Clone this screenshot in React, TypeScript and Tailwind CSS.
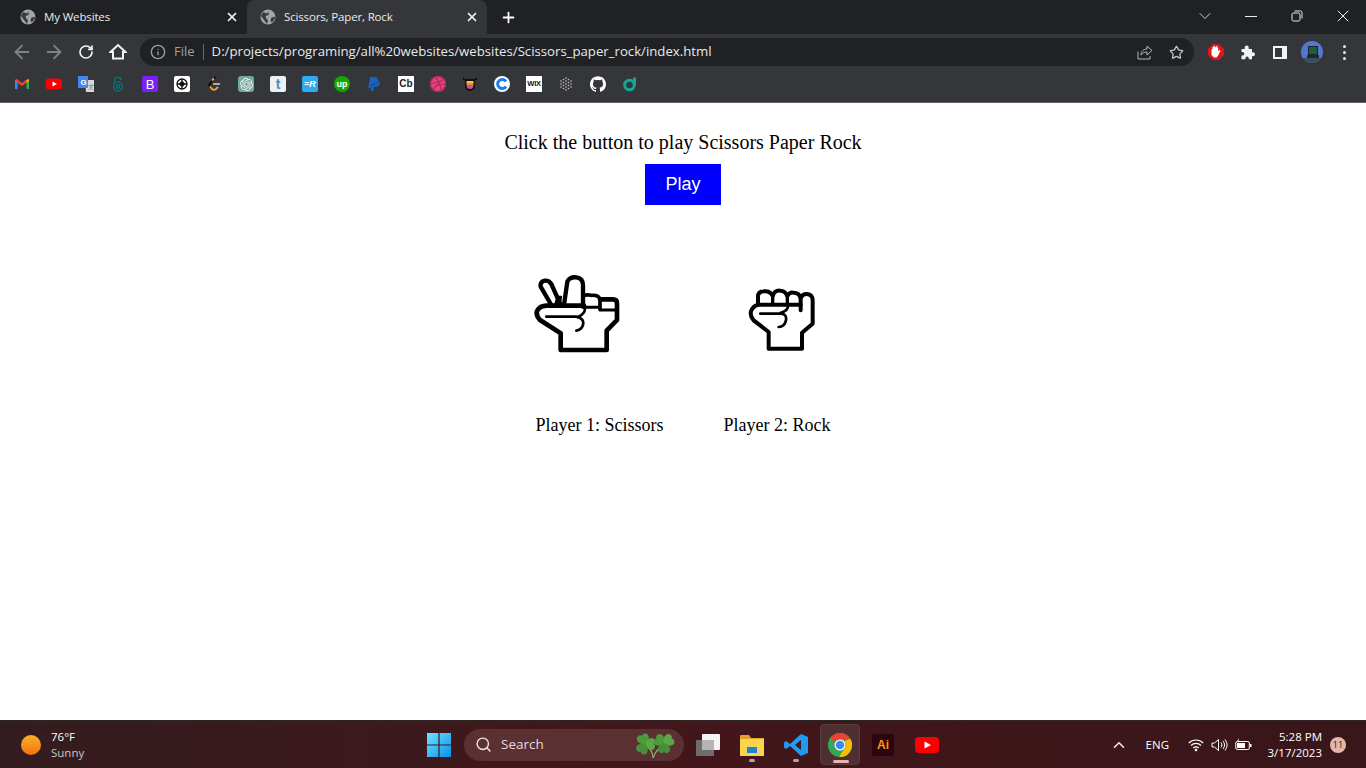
import { ArrowLeft, ArrowRight, RotateCw, Info, Star, X, Plus, ChevronDown, ChevronUp, Search } from "lucide-react";
import { SiOpenai, SiPaypal, SiDribbble, SiGithub } from "react-icons/si";
import type { ReactNode } from "react";

const Globe = () => (
  <svg width="16" height="16" viewBox="0 0 16 16">
    <circle cx="8" cy="8" r="7.500" fill="#a2a6aa" />
    <path d="M3 3 7 4.500 9 2.500 8.500 6 5.500 7 6.500 10 8 11 7 15 4 11 1 7ZM11 9l3.500-1.500.5 2-3 4-1.500-1.500Z" fill="#3a3b3f" />
  </svg>
);

const Tab = ({ title, active }: { title: string; active?: boolean }) => (
  <div className={`flex h-[34px] w-[240px] items-center rounded-t-lg pl-[13px] pr-[8px] ${active ? "bg-[#35363a]" : ""}`}>
    <Globe />
    <span className="ml-[8px] flex-1 text-[11.500px] tracking-[-0.15px] text-[#e8eaed]">{title}</span>
    <X size={14} strokeWidth={3} color="#f1f3f4" />
  </div>
);

const B = ({ children }: { children: ReactNode }) => (
  <div className="flex w-[32px] items-center justify-center">
    <div className="flex h-[16px] w-[16px] items-center justify-center overflow-hidden">{children}</div>
  </div>
);

const bookmarks: ReactNode[] = [
  <svg key="g" width="16" height="16" viewBox="0 0 16 16"><path d="M1 13V4l2.500 1v8Z" fill="#4285f4" /><path d="M12.500 13V5L15 3.500V13Z" fill="#34a853" /><path d="M1 4 2.500 2.700 8 7l5-4 2 .5v1L8 10 1 5Z" fill="#ea4335" /><path d="M12.500 5 15 3v2l-2.500 2Z" fill="#fbbc04" /></svg>,
  <svg key="y" width="16" height="16" viewBox="0 0 16 16"><rect y="2.500" width="16" height="11" rx="3" fill="#f00" /><path d="M6.500 5.500 11 8l-4.500 2.500Z" fill="#fff" /></svg>,
  <svg key="t" width="16" height="16" viewBox="0 0 16 16"><path d="M7 4h9v12H8Z" fill="#d8d8d8" /><rect width="10" height="12" rx="1" fill="#4285f4" /><text x="2.500" y="9" fontSize="8" fontWeight="700" fill="#fff" fontFamily="Liberation Sans, sans-serif">G</text><text x="10" y="13" fontSize="6" fill="#777" fontFamily="Noto Sans CJK SC, sans-serif">文</text></svg>,
  <svg key="o" width="16" height="16" viewBox="0 0 16 16" fill="none" stroke="#0e6f6f" strokeWidth="1.500"><circle cx="8" cy="10.500" r="4.500" /><circle cx="8" cy="10.500" r="1.700" /><path d="M4.500 7V4.200C4.500 .6 11 .6 11.300 4" /></svg>,
  <div key="b" className="flex h-[16px] w-[16px] items-center justify-center rounded-[2px] bg-[#7c1dfa] text-[13px] leading-none text-white [font-family:'Liberation_Sans',sans-serif]">B</div>,
  <div key="c" className="flex h-[16px] w-[16px] items-center justify-center rounded-[2px] bg-white"><svg width="12" height="12" viewBox="0 0 12 12" fill="none" stroke="#111" strokeWidth="1.300"><circle cx="6" cy="6" r="5" /><path d="M6 1v10M1 6h10M6 3.500 8.500 6 6 8.500 3.500 6Z" /></svg></div>,
  <svg key="l" width="16" height="16" viewBox="0 0 16 16" fill="none" strokeWidth="1.800"><path d="M10 1 4 7.500Q2.500 9 4 10.500" stroke="#0b0b0b" /><path d="M4 10.500 6 13q2 1.500 4 0l2-2" stroke="#f0a22e" /><path d="M7 8h7" stroke="#b5b5b5" /><path d="M8 2.500 6 4.500" stroke="#f0a22e" /></svg>,
  <div key="a" className="flex h-[16px] w-[16px] items-center justify-center rounded-[3px] bg-[#74aa9c]"><SiOpenai size={13} color="#e8f2ef" /></div>,
  <div key="tu" className="flex h-[16px] w-[16px] items-center justify-center rounded-[2px] bg-[#eef0f2] text-[14px] font-bold leading-none text-[#3f8fc4] [font-family:'Liberation_Sans',sans-serif]">t</div>,
  <div key="f" className="flex h-[16px] w-[16px] items-center justify-center rounded-[2px] bg-[#2fa9f2] text-[9px] font-bold italic leading-none text-white [font-family:'Liberation_Sans',sans-serif]">=R</div>,
  <div key="u" className="flex h-[16px] w-[16px] items-center justify-center rounded-full bg-[#14a800] text-[9px] font-bold leading-none text-white [font-family:'Liberation_Sans',sans-serif]">up</div>,
  <SiPaypal key="p" size={14} color="#1565c0" />,
  <div key="cb" className="flex h-[16px] w-[16px] items-center justify-center bg-white text-[10px] font-bold leading-none text-[#222] [font-family:'Liberation_Sans',sans-serif]">Cb</div>,
  <div key="d" className="flex h-[16px] w-[16px] items-center justify-center rounded-full bg-[#e0447c]"><SiDribbble size={16} color="#b02a5c" /></div>,
  <svg key="s" width="16" height="16" viewBox="0 0 16 16"><path d="M1 1l2 2h10l2-2v3l-2 .5V10a5 5 0 0 1-10 0V4.500L1 4Z" fill="#111" /><path d="M4.500 5h7v2h-7Z" fill="#f5c842" /><path d="M4.500 7h7v2h-7Z" fill="#f28a3c" /><path d="M4.500 9h7a3.500 4 0 0 1-7 0Z" fill="#d04f9a" /></svg>,
  <svg key="co" width="16" height="16" viewBox="0 0 16 16"><circle cx="8" cy="8" r="8" fill="#fff" /><path d="M12 5.300A4.600 4.600 0 1 0 12 10.700" fill="none" stroke="#1c7ff0" strokeWidth="3" /></svg>,
  <div key="w" className="flex h-[16px] w-[16px] items-center justify-center bg-white text-[7.500px] font-bold leading-none tracking-[-0.3px] text-[#111] [font-family:'Liberation_Sans',sans-serif]">WIX</div>,
  <svg key="dots" width="16" height="16" viewBox="0 0 16 16" fill="#c9c9c9">{[[3, 5], [3, 8], [3, 11], [5.500, 3.500], [5.500, 6.500], [5.500, 9.500], [5.500, 12.500], [8, 2], [8, 5], [8, 8], [8, 11], [8, 14], [10.500, 3.500], [10.500, 6.500], [10.500, 9.500], [10.500, 12.500], [13, 5], [13, 8], [13, 11]].map(([x, y]) => <circle key={`${x}-${y}`} cx={x} cy={y} r="0.800" />)}</svg>,
  <SiGithub key="gh" size={16} color="#fff" />,
  <svg key="te" width="16" height="16" viewBox="0 0 16 16" fill="none" stroke="#11a89a" strokeWidth="3"><circle cx="7.500" cy="9" r="4.800" /><path d="M12.500 9V1.500" /></svg>,
];

const Scissors = () => (
  <svg width="100" height="88" viewBox="0 0 300 264" fill="none" stroke="#000" strokeLinejoin="round" strokeLinecap="round" className="blur-[0.4px]">
    <path d="M70 105 38 50Q35 35 50 32Q62 30 70 42L96 100" strokeWidth="13" />
    <path d="M108 105 118 35Q125 20 145 22Q165 25 165 45V110" strokeWidth="13" />
    <path d="M88 80 100 80 96 105 80 105Z" fill="#000" strokeWidth="5" />
    <path d="M165 78Q175 72 190 76Q212 74 216 88V118" strokeWidth="11" />
    <path d="M216 88H255Q267 88 267 100V150L236 182V240H98V190L36 150Q20 132 30 118Q38 108 55 107H168" strokeWidth="14" />
    <path d="M168 112H216M216 120H267" strokeWidth="9" />
    <path d="M55 140H145Q170 145 165 165Q160 180 145 182" strokeWidth="8" />
    <path d="M170 110Q175 130 150 141" strokeWidth="8" />
  </svg>
);

const Rock = () => (
  <svg width="80" height="72" viewBox="0 0 240 216" fill="none" stroke="#000" strokeLinejoin="round" strokeLinecap="round" className="blur-[0.3px]">
    <path d="M48 68V45Q48 28 65 28Q85 26 92 42Q98 24 115 26Q130 26 136 42Q142 30 155 32Q172 32 176 48V85" strokeWidth="12" />
    <path d="M176 48Q182 35 195 36Q212 38 212 55V125L180 152V200H80V150L35 115Q22 100 28 85Q35 70 50 68H176" strokeWidth="12" />
    <path d="M92 42V66M136 42V66" strokeWidth="10" />
    <path d="M55 95H115Q135 95 132 115Q128 135 110 135" strokeWidth="8" />
    <path d="M138 70Q140 85 115 93" strokeWidth="8" />
  </svg>
);

const Leaf = ({ x, y, r, fill }: { x: number; y: number; r: number; fill: string }) => (
  <path transform={`translate(${x} ${y}) rotate(${r})`} d="M0 0C-7-2-8-9-3-10-1-10.500 0-9 0-8 0-9 1-10.500 3-10 8-9 7-2 0 0Z" fill={fill} />
);

export default function App() {
  return (
    <div className="flex h-[768px] w-[1366px] flex-col overflow-hidden bg-white [font-family:'Open_Sans',sans-serif]">
      <div className="flex h-[34px] items-end bg-[#202124] pl-[7px]">
        <Tab title="My Websites" />
        <Tab title="Scissors, Paper, Rock" active />
        <Plus size={17} strokeWidth={2.500} color="#fff" className="mb-[8px] ml-[13px]" />
        <div className="flex-1" />
        <div className="mb-[8px] flex items-center pr-[13px]">
          <ChevronDown size={20} strokeWidth={1} color="#e8eaed" />
          <div className="ml-[30px] h-px w-[12px] bg-[#e8eaed]" />
          <svg className="ml-[32px]" width="16" height="16" viewBox="0 0 16 16" fill="none" stroke="#e8eaed"><rect x="3" y="5" width="8" height="8" rx="1.500" /><path d="M5.500 3h6A1.500 1.500 0 0 1 13 4.500v6" /></svg>
          <X className="ml-[28px]" size={20} strokeWidth={1.200} color="#f1f3f4" />
        </div>
      </div>
      <div className="flex h-[36px] items-center bg-[#35363a]">
        <div className="flex w-[140px] items-center pl-[6px]">
          <div className="flex w-[32px] justify-center"><ArrowLeft size={22} strokeWidth={2} color="#7f8184" /></div>
          <div className="flex w-[32px] justify-center"><ArrowRight size={22} strokeWidth={2} color="#7f8184" /></div>
          <div className="flex w-[32px] justify-center"><RotateCw size={16} strokeWidth={2.500} color="#f1f3f4" /></div>
          <div className="flex w-[32px] justify-center"><svg width="18" height="18" viewBox="0 0 18 18" fill="none" stroke="#f1f3f4" strokeWidth="2"><path d="M1.500 9 9 2l7.500 7H14v6.500H4V9Z" strokeLinejoin="miter" /></svg></div>
        </div>
        <div className="flex h-[28px] w-[1054px] items-center rounded-full bg-[#202124] pl-[10px] pr-[9px]">
          <Info size={16} color="#9aa0a6" />
          <span className="ml-[8px] text-[13px] text-[#9aa0a6]">File</span>
          <div className="ml-[8px] h-[16px] w-px bg-[#6a6c70]" />
          <span className="ml-[8px] flex-1 text-[13.200px] text-[#e8eaed]">D:/projects/programing/all%20websites/websites/Scissors_paper_rock/index.html</span>
          <svg width="16" height="16" viewBox="0 0 16 16" fill="none" stroke="#b4b7ba" strokeWidth="1"><path d="M1 7.500V15h12v-3" /><path d="M4 11C4 7 7 5 10 5V2l5 4.500L10 11V8C8 8 5.500 8.500 4 11Z" /></svg>
          <Star size={15} color="#c4c7ca" strokeWidth={2} className="ml-[16px] mr-[1px]" />
        </div>
        <div className="flex flex-1 items-center pl-[6px]">
          <div className="flex w-[32px] justify-center">
            <svg width="16" height="16" viewBox="0 0 16 16"><path d="M5 0h6l5 5v6l-5 5H5l-5-5V5Z" fill="#e3131b" /><path d="M3.500 8V5h1V3h1.200V1.800h1.300V3H8v-1h1.200v1.500h1V7l1.500-1 .8.800-2.500 5L8.500 13.500H6L3.500 11Z" fill="#fff" /></svg>
          </div>
          <div className="flex w-[32px] justify-center"><svg width="16" height="16" viewBox="0 0 16 16" fill="#f1f3f4"><path d="M1.500 5h3.200V3.500a2 2 0 0 1 4 0V5h3.300v3.200h1a2 2 0 0 1 0 4h-1v3H8.800v-1a1.700 1.700 0 0 0-3.400 0v1H1.500v-3.700h1a1.800 1.800 0 0 0 0-3.600h-1Z" /></svg></div>
          <div className="flex w-[32px] justify-center"><svg width="14" height="13" viewBox="0 0 14 13"><rect width="14" height="13" fill="#f1f3f4" /><rect x="2" y="2" width="7" height="9" fill="#35363a" /></svg></div>
          <div className="flex w-[32px] justify-center">
            <div className="relative h-[22px] w-[22px] overflow-hidden rounded-full bg-[#5079cf]">
              <div className="absolute bottom-0 left-0 h-[5px] w-full bg-[#39505c]" />
              <div className="absolute left-[7px] top-[5px] h-[9px] w-[10px] border border-[#222] bg-[#1e5c3a]" />
              <div className="absolute left-[6px] top-[14px] h-[3px] w-[12px] bg-[#1f2a33]" />
            </div>
          </div>
          <div className="flex w-[32px] flex-col items-center gap-[3px]">
            <div className="h-[3px] w-[3px] rounded-full bg-[#e8eaed]" />
            <div className="h-[3px] w-[3px] rounded-full bg-[#e8eaed]" />
            <div className="h-[3px] w-[3px] rounded-full bg-[#e8eaed]" />
          </div>
        </div>
      </div>
      <div className="flex h-[33px] items-start border-b border-[#5f6165] bg-[#35363a] pl-[6px] pt-[6px]">
        {bookmarks.map((b, i) => <B key={i}>{b}</B>)}
      </div>

      <main className="flex flex-1 flex-col items-center text-black [font-family:'Liberation_Serif',serif]">
        <p className="mt-[28px] text-[20px] leading-[23px]">Click the button to play Scissors Paper Rock</p>
        <button className="mt-[10px] h-[41px] w-[76px] bg-[#0000ff] text-[18px] text-white [font-family:'Liberation_Sans',sans-serif]">Play</button>
        <div className="mt-[65px] flex items-start gap-[114px] pr-[16px]">
          <Scissors />
          <div className="mt-[12px]"><Rock /></div>
        </div>
        <div className="mt-[57px] flex gap-[60px] text-[18px] leading-[21px]">
          <span>Player 1: Scissors</span>
          <span>Player 2: Rock</span>
        </div>
      </main>

      <footer className="flex h-[48px] items-center border-t border-[#2e2526] bg-gradient-to-r from-[#331c1f] via-[#43161a] to-[#38161a] text-white">
        <div className="ml-[21px] h-[20px] w-[20px] rounded-full bg-gradient-to-b from-[#f6b028] to-[#f5700f]" />
        <div className="ml-[10px] flex w-[376px] flex-col text-[11.500px] leading-[16px]">
          <span>76°F</span>
          <span className="text-[#cfc6c6]">Sunny</span>
        </div>
        <svg width="24" height="24" viewBox="0 0 24 24"><defs><linearGradient id="win" x1="0" y1="0" x2="1" y2="1"><stop offset="0" stopColor="#6fe4ff" /><stop offset="1" stopColor="#0a8fe8" /></linearGradient></defs><path d="M0 0h11.400v11.400H0ZM12.600 0H24v11.400H12.600ZM0 12.600h11.400V24H0ZM12.600 12.600H24V24H12.600Z" fill="url(#win)" /></svg>
        <div className="ml-[13px] flex h-[32px] w-[220px] items-center rounded-full bg-[#5a3033] pl-[11px] pr-[8px]">
          <Search size={17} color="#f0e6e6" />
          <span className="ml-[9px] flex-1 text-[13.500px] text-[#e5dcdc]">Search</span>
          <svg width="44" height="28" viewBox="0 0 44 28">
            <path d="M21 27Q21 20 14 14M21 27Q24 18 33 13" fill="none" stroke="#8fb56a" strokeWidth="1.200" />
            <Leaf x={13} y={13} r={-20} fill="#4d9a3a" />
            <Leaf x={13} y={13} r={90} fill="#5aa843" />
            <Leaf x={13} y={13} r={210} fill="#47903a" />
            <Leaf x={32} y={12} r={-60} fill="#4d9a3a" />
            <Leaf x={32} y={12} r={60} fill="#5aa843" />
            <Leaf x={32} y={12} r={180} fill="#47903a" />
          </svg>
        </div>
        <div className="ml-[12px] flex items-center">
          <svg width="24" height="24" viewBox="0 0 24 24"><rect x="0" y="7" width="18" height="16" rx="1" fill="#6e6e6e" /><rect x="6" y="1" width="18" height="16" rx="1" fill="#f4f4f4" /><rect x="6" y="7" width="12" height="10" fill="#b5b5b5" /></svg>
          <div className="relative ml-[20px] h-[24px] w-[24px]">
            <svg width="24" height="24" viewBox="0 0 24 24"><path d="M0 3q0-1 1-1h8l2 3h13v18H0Z" fill="#e0a526" /><path d="M0 6h24v17H0Z" fill="#fbd44e" /><rect x="7" y="14" width="10" height="6" fill="#1c84d2" /></svg>
            <div className="absolute left-[9px] top-[26px] h-[3px] w-[6px] rounded-full bg-[#b0a5a5]" />
          </div>
          <div className="relative ml-[20px] h-[24px] w-[24px]">
            <svg width="24" height="24" viewBox="0 0 24 24"><path d="M17 1 24 4v16l-7 3L6 13l-4 3-2-1.500V9.500L2 8l4 3ZM17 7l-6 5 6 5Z" fill="#1f9cf0" /></svg>
            <div className="absolute left-[9px] top-[26px] h-[3px] w-[6px] rounded-full bg-[#b0a5a5]" />
          </div>
          <div className="relative ml-[12px] flex h-[41px] w-[40px] items-center justify-center rounded-[4px] border border-[#5a3a3c] bg-[#4e2f32]">
            <svg width="24" height="24" viewBox="0 0 24 24"><circle cx="12" cy="12" r="12" fill="#34a853" /><path d="M12 0a12 12 0 0 1 10.400 6H12a6 6 0 0 0-5.600 3.800L2.500 4.700A12 12 0 0 1 12 0Z" fill="#ea4335" /><path d="M22.400 6A12 12 0 0 1 11 24l5.500-8.500A6 6 0 0 0 16.500 8Z" fill="#fbbc04" /><circle cx="12" cy="12" r="5.500" fill="#fff" /><circle cx="12" cy="12" r="4.300" fill="#4285f4" /></svg>
            <div className="absolute bottom-[1px] left-[12px] h-[3px] w-[16px] rounded-full bg-[#e8b4a8]" />
          </div>
          <div className="ml-[12px] flex h-[22px] w-[22px] items-center justify-center rounded-[3px] bg-[#2a0610] text-[12px] font-bold leading-none text-[#ff9a00] [font-family:'Liberation_Sans',sans-serif]">Ai</div>
          <svg className="ml-[21px]" width="24" height="24" viewBox="0 0 24 24"><rect y="4" width="24" height="16" rx="4" fill="#f00" /><path d="M9.500 8.500 16 12l-6.500 3.500Z" fill="#fff" /></svg>
        </div>
        <div className="flex-1" />
        <div className="flex items-center pr-[20px]">
          <ChevronUp size={18} strokeWidth={2} color="#f4eeee" />
          <span className="ml-[18px] text-[11.500px]">ENG</span>
          <svg className="ml-[19px]" width="16" height="14" viewBox="0 0 16 14" fill="none" stroke="#fff" strokeWidth="1.100"><path d="M.8 5a10 10 0 0 1 14.400 0M3 7.500a7 7 0 0 1 10 0M5.300 10a3.700 3.700 0 0 1 5.400 0" /><circle cx="8" cy="12" r=".8" fill="#fff" /></svg>
          <svg className="ml-[7px]" width="17" height="14" viewBox="0 0 17 14" fill="none" stroke="#fff" strokeWidth="1"><path d="M1 5v4h2.500L7.500 12.500v-11L3.500 5ZM10 4.500a4 4 0 0 1 0 5M12 3a6 6 0 0 1 0 8M14 1.500a9 9 0 0 1 0 11" /></svg>
          <svg className="ml-[7px]" width="17" height="14" viewBox="0 0 17 14"><rect x=".8" y="3.500" width="13.500" height="8" rx="1.500" fill="none" stroke="#fff" /><rect x="2" y="5" width="8" height="5" fill="#fff" /><rect x="15" y="6" width="1.500" height="3" fill="#fff" /><path d="M4 0 2 3.500h2L3 6Z" fill="#fff" /></svg>
          <div className="flex w-[70px] flex-col items-end text-[11.500px] leading-[16px]">
            <span>5:28 PM</span>
            <span>3/17/2023</span>
          </div>
          <div className="ml-[8px] flex h-[16px] w-[16px] items-center justify-center rounded-full bg-[#e8b4a8] text-[9px] leading-none text-[#2a1416]">11</div>
        </div>
      </footer>
    </div>
  );
}
